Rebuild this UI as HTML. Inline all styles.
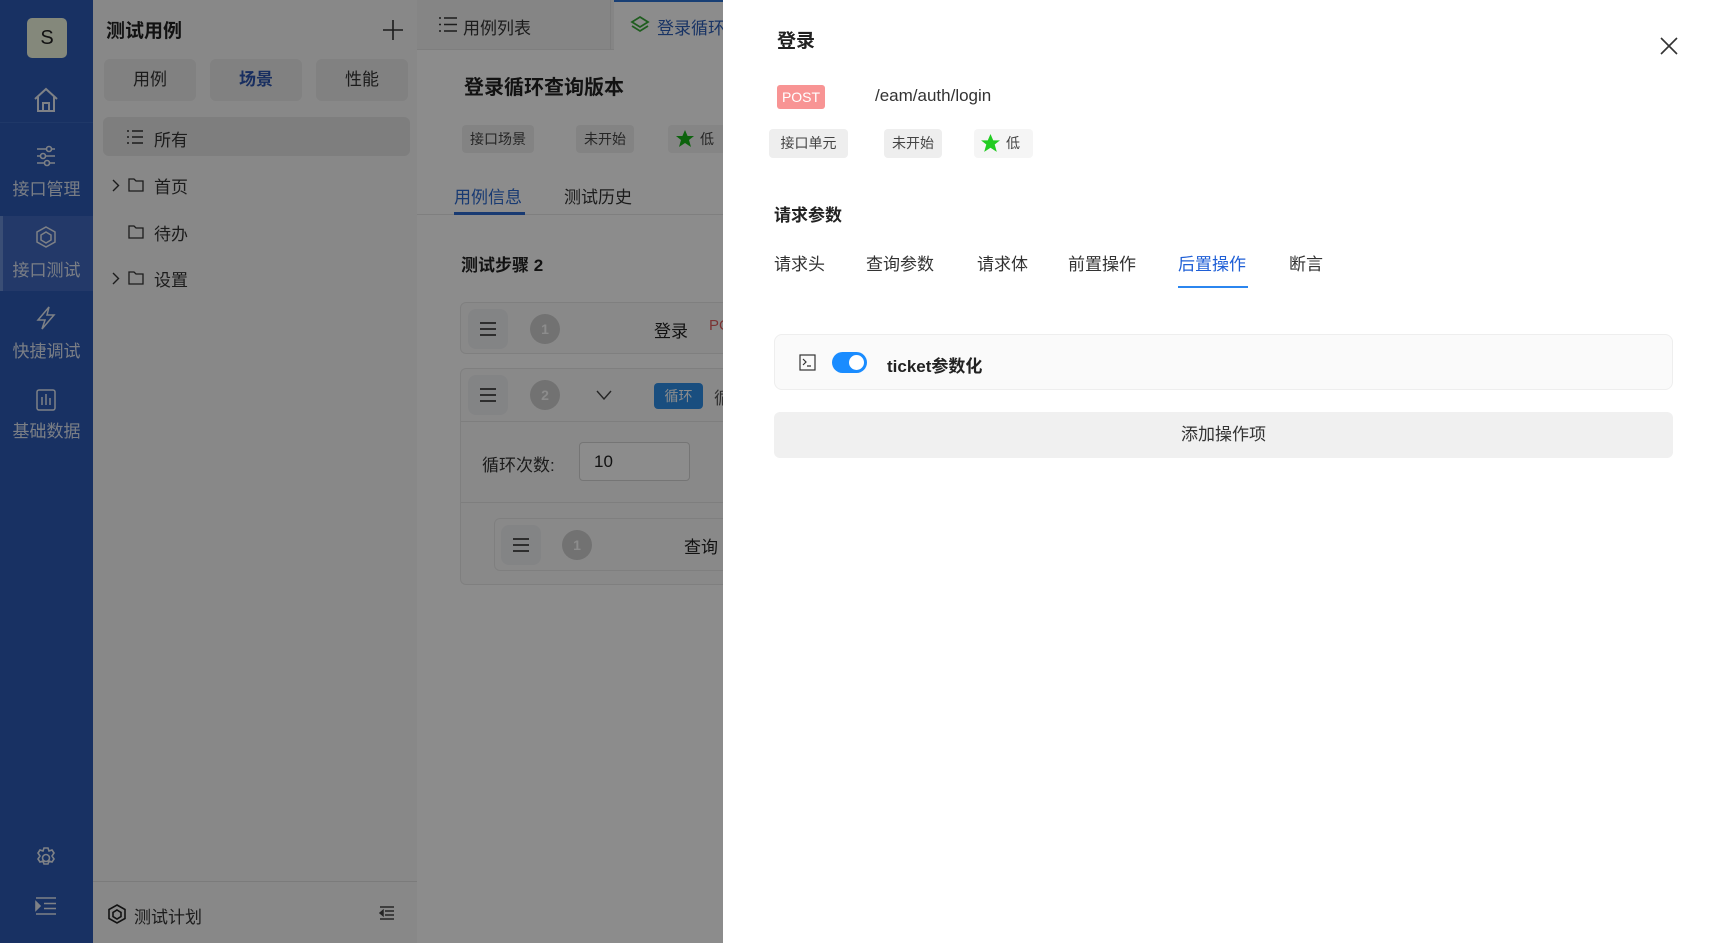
<!DOCTYPE html>
<html><head><meta charset="utf-8"><style>
*{margin:0;padding:0;box-sizing:border-box}
body{width:1721px;height:943px;overflow:hidden;position:relative;background:#fff;font-family:"Liberation Sans","Noto Sans CJK SC",sans-serif;color:#222}
.a{position:absolute}
.side{left:0;top:0;width:93px;height:943px;background:#2c5ab4;color:#e6ecf5}
.nl{position:absolute;left:0;width:93px;text-align:center;font-size:17px;color:#dfe6f3}
.lp{left:93px;top:0;width:324px;height:943px;background:#f7f7f7}
.btn{position:absolute;top:59px;height:42px;width:92px;background:#ebebeb;border-radius:6px;text-align:center;line-height:42px;font-size:17px;color:#333}
.tree{position:absolute;font-size:17px;color:#333}
.main{left:417px;top:0;width:306px;height:943px;background:#fff}
.tag{position:absolute;height:28px;line-height:28px;border-radius:4px;background:#eee;font-size:14px;color:#444;padding:0 8px}
.card{position:absolute;border:1px solid #e8e8e8;border-radius:6px;background:#fafafa}
.hd{position:absolute;width:40px;height:40px;border-radius:8px;background:#eef0f3}
.hd:before{content:"";position:absolute;left:12px;top:13px;width:16px;height:2px;background:#555;box-shadow:0 6px 0 #555,0 12px 0 #555}
.num{position:absolute;width:30px;height:30px;border-radius:50%;background:#cfcfcf;color:#fff;font-size:14px;text-align:center;line-height:30px;font-weight:bold}
.ov{left:0;top:0;width:723px;height:943px;background:rgba(0,0,0,.45)}
.dr{left:723px;top:0;width:998px;height:943px;background:#fff}
.t{position:absolute;font-size:17px;color:#333;top:250px}
</style></head><body>
<div class="a side">
 <div class="a" style="left:27px;top:18px;width:40px;height:40px;border-radius:5px;background:#f0f8e0;color:#222;text-align:center;line-height:40px;font-size:20px">S</div>
 <svg class="a" style="left:32px;top:87px" width="28" height="26" viewBox="0 0 28 26" fill="none" stroke="#e6ecf5" stroke-width="2"><path d="M3 12L14 2l11 10M6 10v14h16V10M11 24v-8h6v8"/></svg>
 <div class="a" style="left:0;top:122px;width:93px;height:1px;background:#3a66bd"></div>
 <svg class="a" style="left:35px;top:145px" width="22" height="22" viewBox="0 0 22 22" fill="none" stroke="#e6ecf5" stroke-width="1.6"><path d="M2 4h18M2 11h18M2 18h18"/><circle cx="14" cy="4" r="2.5" fill="#2c5ab4"/><circle cx="8" cy="11" r="2.5" fill="#2c5ab4"/><circle cx="12" cy="18" r="2.5" fill="#2c5ab4"/></svg>
 <div class="nl" style="top:175px">接口管理</div>
 <div class="a" style="left:0;top:216px;width:93px;height:75px;background:#4069bf;border-left:3px solid #6a8fd6"></div>
 <svg class="a" style="left:35px;top:226px" width="22" height="22" viewBox="0 0 22 22" fill="none" stroke="#e6ecf5" stroke-width="1.5"><path d="M11 1l9 5v10l-9 5-9-5V6z"/><path d="M11 6l5 3v5l-5 3-5-3V9z"/></svg>
 <div class="nl" style="top:256px">接口测试</div>
 <svg class="a" style="left:35px;top:306px" width="22" height="24" viewBox="0 0 22 24" fill="none" stroke="#e6ecf5" stroke-width="1.5"><path d="M14 1L3 14h7l-3 9 12-14h-7z"/></svg>
 <div class="nl" style="top:337px">快捷调试</div>
 <svg class="a" style="left:36px;top:389px" width="20" height="22" viewBox="0 0 20 22" fill="none" stroke="#e6ecf5" stroke-width="1.5"><rect x="1" y="1" width="18" height="20" rx="2"/><path d="M6 8v8M10 5v11M14 9v7"/></svg>
 <div class="nl" style="top:417px">基础数据</div>
 <svg class="a" style="left:34px;top:846px" width="24" height="24" viewBox="0 0 24 24" fill="none" stroke="#e6ecf5" stroke-width="1.6"><circle cx="12" cy="12" r="3.5"/><path d="M10 2h4l1 3 3-1 2 3-2 3 2 3-2 3-3-1-1 3h-4l-1-3-3 1-2-3 2-3-2-3 2-3 3 1z"/></svg>
 <svg class="a" style="left:35px;top:897px" width="22" height="18" viewBox="0 0 22 18" fill="none" stroke="#e6ecf5" stroke-width="1.6"><path d="M1 1h20M9 6.5h12M9 11.5h12M1 17h20"/><path d="M1 5l4 4-4 4z" fill="#e6ecf5"/></svg>
</div>
<div class="a lp">
 <div class="a" style="left:13px;top:16px;font-size:19px;font-weight:bold;color:#222">测试用例</div>
 <svg class="a" style="left:290px;top:20px" width="20" height="20" viewBox="0 0 20 20" stroke="#333" stroke-width="1.6"><path d="M10 0v20M0 10h20"/></svg>
 <div class="btn" style="left:11px">用例</div>
 <div class="btn" style="left:117px;color:#2c54b0;font-weight:bold">场景</div>
 <div class="btn" style="left:223px">性能</div>
 <div class="a" style="left:10px;top:117px;width:307px;height:39px;background:#e6e6e6;border-radius:6px"></div>
 <svg class="a" style="left:34px;top:130px" width="16" height="14" viewBox="0 0 16 14" stroke="#333" stroke-width="1.4"><path d="M0 1h2M0 7h2M0 13h2M5 1h11M5 7h11M5 13h11"/></svg>
 <div class="tree" style="left:61px;top:126px">所有</div>
 <svg class="a" style="left:19px;top:179px" width="8" height="13" viewBox="0 0 8 13" fill="none" stroke="#333" stroke-width="1.4"><path d="M1 1l5.5 5.5L1 12"/></svg>
 <svg class="a" style="left:35px;top:178px" width="16" height="14" viewBox="0 0 16 14" fill="none" stroke="#333" stroke-width="1.3"><path d="M1 1h5l2 2h7v10H1z"/></svg>
 <div class="tree" style="left:61px;top:173px">首页</div>
 <svg class="a" style="left:35px;top:225px" width="16" height="14" viewBox="0 0 16 14" fill="none" stroke="#333" stroke-width="1.3"><path d="M1 1h5l2 2h7v10H1z"/></svg>
 <div class="tree" style="left:61px;top:220px">待办</div>
 <svg class="a" style="left:19px;top:272px" width="8" height="13" viewBox="0 0 8 13" fill="none" stroke="#333" stroke-width="1.4"><path d="M1 1l5.5 5.5L1 12"/></svg>
 <svg class="a" style="left:35px;top:271px" width="16" height="14" viewBox="0 0 16 14" fill="none" stroke="#333" stroke-width="1.3"><path d="M1 1h5l2 2h7v10H1z"/></svg>
 <div class="tree" style="left:61px;top:266px">设置</div>
 <div class="a" style="left:0;top:881px;width:324px;height:1px;background:#e0e0e0"></div>
 <svg class="a" style="left:15px;top:904px" width="18" height="20" viewBox="0 0 18 20" fill="none" stroke="#222" stroke-width="1.6"><path d="M9 1l8 4.5v9L9 19l-8-4.5v-9z"/><path d="M9 6l4 2.5v4L9 15l-4-2.5v-4z"/></svg>
 <div class="tree" style="left:41px;top:903px">测试计划</div>
 <svg class="a" style="left:286px;top:906px" width="16" height="14" viewBox="0 0 16 14" fill="none" stroke="#444" stroke-width="1.5"><path d="M1 1h14M6 5h9M6 9h9M1 13h14"/><path d="M4 4.5L1 7l3 2.5z" fill="#444"/></svg>
</div>
<div class="a main">
 <div class="a" style="left:0;top:0;width:306px;height:50px;background:#f3f3f3;border-bottom:1px solid #e6e6e6"></div>
 <div class="a" style="left:0;top:0;width:194px;height:50px;border-right:1px solid #e3e3e3"></div>
 <svg class="a" style="left:22px;top:17px" width="18" height="15" viewBox="0 0 18 15" stroke="#333" stroke-width="1.6"><path d="M0 1h2M0 7.5h2M0 14h2M5 1h13M5 7.5h13M5 14h13"/></svg>
 <div class="a" style="left:46px;top:14px;font-size:17px;color:#333">用例列表</div>
 <div class="a" style="left:197px;top:0;width:110px;height:50px;background:#fff;border-top:2px solid #2c74d6"></div>
 <svg class="a" style="left:213px;top:15px" width="20" height="20" viewBox="0 0 20 20" fill="none" stroke="#3aaa3a" stroke-width="1.8"><path d="M10 2l8 5-8 5-8-5z"/><path d="M2 11l8 5 8-5"/></svg>
 <div class="a" style="left:240px;top:14px;font-size:17px;color:#2e5fb8;white-space:nowrap">登录循环</div>
 <div class="a" style="left:47px;top:71px;font-size:20px;font-weight:bold;color:#222;white-space:nowrap">登录循环查询版本</div>
 <div class="tag" style="left:45px;top:125px">接口场景</div>
 <div class="tag" style="left:159px;top:125px">未开始</div>
 <div class="tag" style="left:251px;top:125px;width:62px;padding-left:32px;background:#f2f2f2">低</div>
 <svg class="a" style="left:258px;top:129px" width="20" height="20" viewBox="0 0 20 20"><path d="M10 1l2.6 6H19l-5 4 2 7-6-4-6 4 2-7-5-4h6.4z" fill="#18b418"/></svg>
 <div class="a" style="left:0;top:214px;width:306px;height:1px;background:#e8e8e8"></div>
 <div class="a" style="left:37px;top:183px;font-size:17px;color:#2c6ad0">用例信息</div>
 <div class="a" style="left:37px;top:212px;width:71px;height:3px;background:#2c6ad0"></div>
 <div class="a" style="left:147px;top:183px;font-size:17px;color:#333">测试历史</div>
 <div class="a" style="left:44px;top:251px;font-size:17px;font-weight:bold;color:#222">测试步骤 2</div>
 <div class="card" style="left:43px;top:302px;width:280px;height:52px"></div>
 <div class="hd" style="left:51px;top:309px"></div>
 <div class="num" style="left:113px;top:314px">1</div>
 <div class="a" style="left:237px;top:317px;font-size:17px;color:#222">登录</div>
 <div class="a" style="left:292px;top:317px;font-size:15px;color:#e06060">POST</div>
 <div class="card" style="left:43px;top:368px;width:280px;height:217px"></div>
 <div class="a" style="left:44px;top:421px;width:280px;height:1px;background:#e6e6e6"></div>
 <div class="a" style="left:44px;top:502px;width:280px;height:1px;background:#e6e6e6"></div>
 <div class="hd" style="left:51px;top:375px"></div>
 <div class="num" style="left:113px;top:380px">2</div>
 <svg class="a" style="left:179px;top:390px" width="16" height="10" viewBox="0 0 16 10" fill="none" stroke="#444" stroke-width="1.4"><path d="M1 1l7 8 7-8"/></svg>
 <div class="a" style="left:237px;top:383px;width:49px;height:26px;background:#2f8fe8;border-radius:4px;color:#fff;font-size:14px;text-align:center;line-height:26px">循环</div>
 <div class="a" style="left:297px;top:384px;font-size:17px;color:#555">循</div>
 <div class="a" style="left:65px;top:451px;font-size:17px;color:#333">循环次数:</div>
 <div class="a" style="left:162px;top:442px;width:111px;height:39px;border:1px solid #d6d6d6;border-radius:4px;background:#fff;font-size:17px;line-height:37px;padding-left:14px">10</div>
 <div class="card" style="left:77px;top:518px;width:240px;height:53px"></div>
 <div class="hd" style="left:84px;top:525px"></div>
 <div class="num" style="left:145px;top:530px">1</div>
 <div class="a" style="left:267px;top:533px;font-size:17px;color:#222;white-space:nowrap">查询</div>
</div>
<div class="a ov"></div>
<div class="a dr">
 <div class="a" style="left:54px;top:26px;font-size:19px;font-weight:bold;color:#222">登录</div>
 <svg class="a" style="left:937px;top:37px" width="18" height="18" viewBox="0 0 18 18" stroke="#333" stroke-width="1.6"><path d="M1 1l16 16M17 1L1 17"/></svg>
 <div class="a" style="left:54px;top:85px;width:48px;height:24px;background:#f89494;border-radius:3px;color:#fff;font-size:14px;text-align:center;line-height:24px">POST</div>
 <div class="a" style="left:152px;top:86px;font-size:17px;color:#333">/eam/auth/login</div>
 <div class="tag" style="left:46px;top:129px;height:29px;line-height:29px;width:79px;text-align:center;padding:0">接口单元</div>
 <div class="tag" style="left:161px;top:129px;height:29px;line-height:29px;width:58px;text-align:center;padding:0">未开始</div>
 <div class="tag" style="left:251px;top:129px;height:29px;line-height:29px;width:59px;padding-left:32px;background:#f5f5f5">低</div>
 <svg class="a" style="left:257px;top:133px" width="21" height="21" viewBox="0 0 20 20"><path d="M10 1l2.6 6H19l-5 4 2 7-6-4-6 4 2-7-5-4h6.4z" fill="#22cc22"/></svg>
 <div class="a" style="left:51px;top:201px;font-size:17px;font-weight:bold;color:#222">请求参数</div>
 <div class="t" style="left:51px">请求头</div>
 <div class="t" style="left:143px">查询参数</div>
 <div class="t" style="left:254px">请求体</div>
 <div class="t" style="left:345px">前置操作</div>
 <div class="t" style="left:455px;color:#1f5fd6">后置操作</div>
 <div class="t" style="left:566px">断言</div>
 <div class="a" style="left:455px;top:286px;width:70px;height:2px;background:#2b86ef"></div>
 <div class="a" style="left:51px;top:334px;width:899px;height:56px;background:#fafafa;border:1px solid #eee;border-radius:8px"></div>
 <svg class="a" style="left:76px;top:354px" width="17" height="17" viewBox="0 0 17 17" fill="none" stroke="#333" stroke-width="1.2"><rect x="1" y="1" width="15" height="15"/><path d="M4 5l3 3-3 3M8 12h4"/></svg>
 <div class="a" style="left:109px;top:352px;width:35px;height:21px;background:#1a8cff;border-radius:11px"></div>
 <div class="a" style="left:126px;top:355px;width:15px;height:15px;background:#fff;border-radius:50%"></div>
 <div class="a" style="left:164px;top:352px;font-size:17px;font-weight:bold;color:#222">ticket参数化</div>
 <div class="a" style="left:51px;top:412px;width:899px;height:46px;background:#f0f0f0;border-radius:6px;text-align:center;line-height:46px;font-size:17px;color:#333">添加操作项</div>
</div>
</body></html>
